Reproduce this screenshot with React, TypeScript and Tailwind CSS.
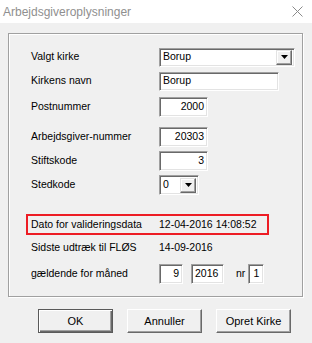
import React from 'react';

const sunken =
  'border border-t-[#a0a0a0] border-l-[#a0a0a0] border-b-white border-r-white bg-white shadow-[inset_1px_1px_0_#696969,inset_-1px_-1px_0_#e3e3e3]';

const DropButton = () => (
  <div className="flex h-[15px] w-[16px] items-center justify-center border border-t-[#e3e3e3] border-l-[#e3e3e3] border-b-[#696969] border-r-[#696969] bg-[#f0f0f0] shadow-[inset_-1px_-1px_0_#a0a0a0,inset_1px_1px_0_#fff]">
    <svg width="7" height="4" viewBox="0 0 7 4">
      <path d="M0 0h7L3.5 4z" fill="#000" />
    </svg>
  </div>
);

const Row = ({ label, mt, children }: { label: string; mt: string; children: React.ReactNode }) => (
  <div className={`flex h-[20px] items-center pl-[5px] ${mt}`}>
    <span className="w-[128px] shrink-0">{label}</span>
    {children}
  </div>
);

const Button = ({ label, isDefault }: { label: string; isDefault?: boolean }) => (
  <div
    className={`flex h-[24px] w-[75px] items-center justify-center bg-[#f0f0f0] text-[11px] ${
      isDefault
        ? 'border border-[#5a5a5a] shadow-[inset_1px_1px_0_#fff,inset_-1px_-1px_0_#696969,inset_-2px_-2px_0_#a0a0a0]'
        : 'border border-t-white border-l-white border-b-[#696969] border-r-[#696969] shadow-[inset_-1px_-1px_0_#a0a0a0]'
    }`}
  >
    {label}
  </div>
);

export default function App() {
  return (
    <div className="h-[343px] w-[312px] overflow-hidden bg-[#f0f0f0] font-['Liberation_Sans',Arial,sans-serif] text-[10.5px] text-black">
      {/* Title bar */}
      <div className="flex h-[23px] items-center justify-between bg-white pl-[3px] pr-[9px]">
        <span className="text-[12px] text-[#8f8f8f]">Arbejdsgiveroplysninger</span>
        <svg width="11" height="11" viewBox="0 0 11 11">
          <path d="M0.5 0.5l10 10M10.5 0.5l-10 10" stroke="#8a8a8a" strokeWidth="1" />
        </svg>
      </div>

      {/* Group box */}
      <div className="ml-[8px] mt-[10px] w-[295px] border border-[#a0a0a0] pb-[12px] pl-[17px] pt-[13px] shadow-[1px_1px_0_#fff,inset_1px_1px_0_#fff]">
        <Row label="Valgt kirke" mt="mt-0">
          <div className={`flex h-[19px] w-[136px] items-center justify-between pl-[3px] pr-[2px] ${sunken}`}>
            <span>Borup</span>
            <DropButton />
          </div>
        </Row>
        <Row label="Kirkens navn" mt="mt-[4px]">
          <div className={`flex h-[19px] w-[120px] items-center pl-[3px] ${sunken}`}>Borup</div>
        </Row>
        <Row label="Postnummer" mt="mt-[6px]">
          <div className={`flex h-[20px] w-[49px] items-center justify-end pr-[3px] ${sunken}`}>2000</div>
        </Row>
        <Row label="Arbejdsgiver-nummer" mt="mt-[10px]">
          <div className={`flex h-[20px] w-[49px] items-center justify-end pr-[3px] ${sunken}`}>20303</div>
        </Row>
        <Row label="Stiftskode" mt="mt-[4px]">
          <div className={`flex h-[20px] w-[49px] items-center justify-end pr-[3px] ${sunken}`}>3</div>
        </Row>
        <Row label="Stedkode" mt="mt-[4px]">
          <div className={`flex h-[20px] w-[40px] items-center justify-between pl-[3px] pr-[2px] ${sunken}`}>
            <span>0</span>
            <DropButton />
          </div>
        </Row>

        <div className="mt-[19px] flex h-[21px] w-[243px] items-center border-2 border-[#ed1c24] pl-[3px]">
          <span className="w-[128px] shrink-0">Dato for valideringsdata</span>
          <span>12-04-2016 14:08:52</span>
        </div>

        <Row label="Sidste udtræk til FLØS" mt="mt-[3px]">
          <span>14-09-2016</span>
        </Row>
        <Row label="gældende for måned" mt="mt-[6px]">
          <div className="flex items-center">
            <div className={`flex h-[20px] w-[24px] items-center justify-end pr-[3px] ${sunken}`}>9</div>
            <div className={`ml-[8px] flex h-[20px] w-[33px] items-center pl-[3px] ${sunken}`}>2016</div>
            <span className="ml-[12px]">nr</span>
            <div className={`ml-[3px] flex h-[20px] w-[16px] items-center justify-center ${sunken}`}>1</div>
          </div>
        </Row>
      </div>

      {/* Buttons */}
      <div className="mt-[12px] flex gap-[14px] pl-[38px]">
        <Button label="OK" isDefault />
        <Button label="Annuller" />
        <Button label="Opret Kirke" />
      </div>
    </div>
  );
}
